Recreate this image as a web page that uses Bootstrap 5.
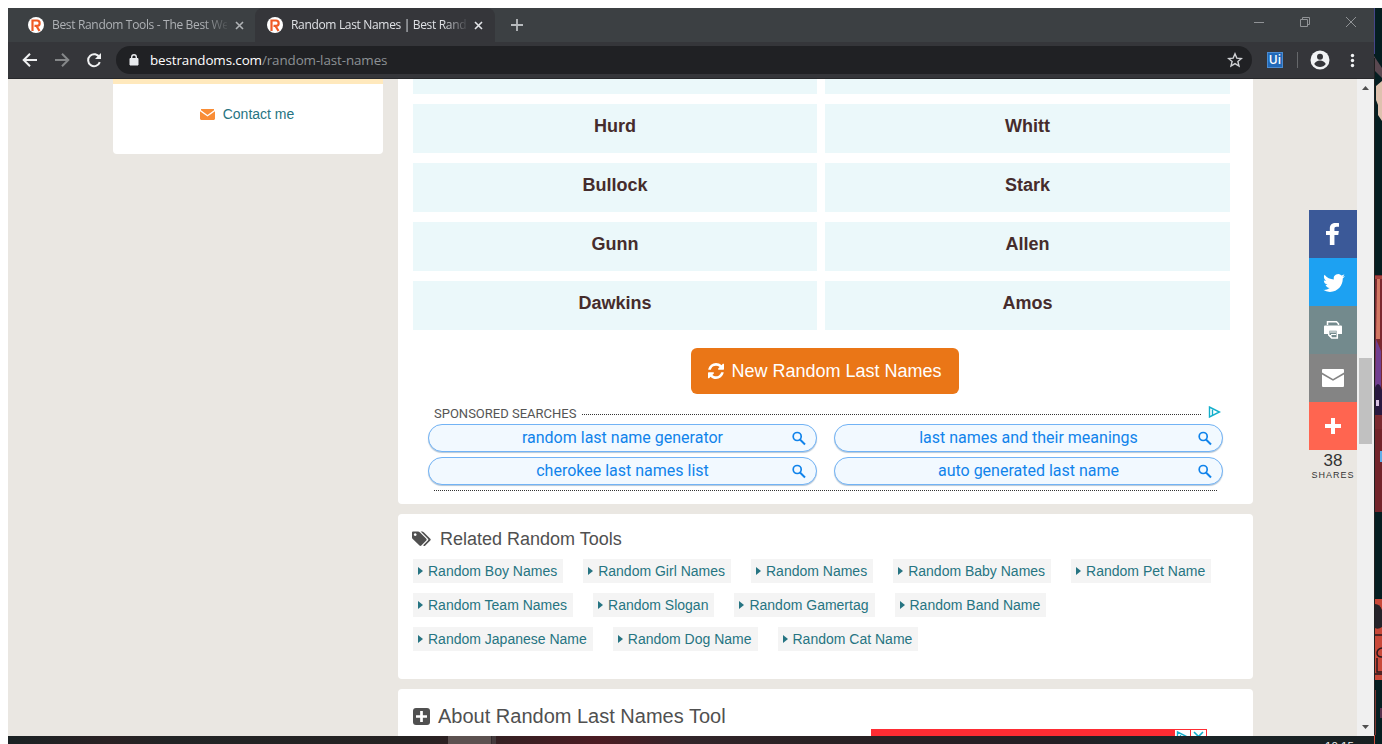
<!DOCTYPE html>
<html lang="en">
<head>
<meta charset="utf-8">
<title>Random Last Names | Best Random Tools</title>
<link href="https://cdn.jsdelivr.net/npm/bootstrap@5.3.0/dist/css/bootstrap.min.css" rel="stylesheet">
<style>
body{width:1382px;height:744px;overflow:hidden;background:#fff;font-family:"Liberation Sans",Arial,sans-serif;font-size:14px;line-height:20px;padding:8px 0 0 8px}
svg{display:block;flex:none}
.win{width:1366px}
.ui{font-family:"Open Sans","Noto Sans",sans-serif}
.strip{height:34px;background:#3c4043;color:#aeb1b5}
.tab{height:34px;font-size:12px;line-height:34px}
.tab-a{width:247px;padding-left:20px}
.tab-b{width:240px;padding-left:12px;background:#35363a;color:#dfe1e5;border-radius:8px 8px 0 0}
.tab-label{width:175px;margin:0 8px 0 8px;overflow:hidden;white-space:nowrap;letter-spacing:-.33px;-webkit-mask-image:linear-gradient(90deg,#000 152px,transparent 178px);mask-image:linear-gradient(90deg,#000 152px,transparent 178px)}
.toolbar{height:37px;background:#35363a;border-bottom:1px solid #27282b;padding-left:14px}
.omni{width:1136px;height:28px;border-radius:14px;background:#202124;margin-left:14px;padding:0 9px 0 12px;font-size:13.4px;color:#8d9195}
.url{margin-left:10px;letter-spacing:-.1px}
.omni b{font-weight:400;color:#fff}
.ext{width:16px;height:16px;background:#2169b8;border:1px solid #4b8bd0;color:#fff;font-size:12px;line-height:14px;font-weight:600;text-align:center;margin-left:15px}
.page{height:657px;background:#eae7e2}
.side{width:270px;height:75px;margin-left:105px;background:#fff;border-radius:0 0 4px 4px;border-top:5px solid #ffe9bd;padding-right:2px}
.side a{color:#267482;text-decoration:none}
.main-col{width:855px;margin-left:15px}
.panel{background:#fff;border-radius:4px;margin-bottom:10px;color:#505050}
.panel-a{height:425px;border-radius:0 0 4px 4px;padding:0 23px 0 15px}
.names{display:grid;grid-template-columns:404px 405px;gap:10px 8px;grid-template-rows:15px repeat(4,49px)}
.names div{background:#ebf8fa;text-align:center;font-size:18px;font-weight:700;color:#452c2c;line-height:44px}
.btn-new,.btn-new:hover{width:268px;height:46px;background:#ea7617;color:#fff;font-size:18px;border:0;border-radius:6px;padding:0;margin:18px auto 9px 278px}
.rob{font-family:Roboto,sans-serif}
.spon{height:20px;font-size:13px;color:#555;padding:0 9px 0 21px}
.dots{border-top:1px dotted #333;height:1px}
.pills{display:grid;grid-template-columns:389px 389px;gap:5px 17px;margin:1px 0 5px 15px}
.pill{height:28px;border:1px solid #72b3f5;border-radius:14px;background:#f2f9ff;box-shadow:0 1px 1px #b5c7d8;color:#1083eb;font-size:16px;line-height:26px;text-align:center;position:relative}
.pill svg{position:absolute;right:9px;top:6px}
.panel-b{height:165px;padding:12px 15px}
.ttl{font-size:18px;line-height:26px;font-weight:400;margin:0 0 7px;height:26px}
.tags{display:flex;flex-wrap:wrap;gap:10px 20px}
.tags a{height:24px;background:#f4f4f4;color:#267482;text-decoration:none;line-height:24px;padding:0 6px 0 5px;display:flex;align-items:center;white-space:nowrap}
.tags a::before{content:"";border:4px solid transparent;border-left:5px solid #267482;border-right:0;margin-right:5px}
.panel-c{height:47px;border-radius:4px 4px 0 0;padding:14px 15px 0;margin:0}
.ad{width:336px;height:7px;background:#fe2c33;margin-left:458px;padding:1px 1px 0 0}
.ad span{width:15px;height:6px;background:#fff;margin-left:1px;overflow:hidden}
.share{position:absolute;right:17px;top:131px;width:48px;text-align:center;color:#333}
.share>div{height:48px;display:flex;align-items:center;justify-content:center}
.share p{margin:0}
.scroll{width:17px;background:#f0f0f0;margin-left:auto;padding:7px 0 7px 0}
.thumb{width:13px;height:86px;background:#c1c1c1}
.task{height:8px;overflow:hidden;color:#eee;font-size:12px;line-height:20px;background:linear-gradient(90deg,#1a2224,#2a2123 100px,#222425 160px,#252222 400px,#352022 490px,#4b1b22 590px,#32252a 680px,#2a2224 800px,#241f24 1050px,#1c2528 1120px,#182022)}
.task i{width:44px;height:8px;background:#5c5150;border-right:1px solid #332b2d;box-shadow:4px 0 #443a3c;margin-left:440px}
</style>
</head>
<body>
<div class="d-flex">
<div class="win">
 <div class="strip ui d-flex">
  <div class="tab tab-a d-flex align-items-center">
   <svg width="16" height="16"><circle cx="8" cy="8" r="8" fill="#fff"/><path d="M4.500 14V3.500H9a2.600 2.600 0 0 1 0 5.300H6.500M8.500 9l3 5" fill="none" stroke="#ef5a24" stroke-width="2.200"/></svg>
   <span class="tab-label">Best Random Tools - The Best We</span>
   <svg width="9" height="9"><path d="M1 1l7 7M8 1L1 8" stroke="#b0b3b6" stroke-width="1.600"/></svg>
  </div>
  <div class="tab tab-b d-flex align-items-center">
   <svg width="16" height="16"><circle cx="8" cy="8" r="8" fill="#fff"/><path d="M4.500 14V3.500H9a2.600 2.600 0 0 1 0 5.300H6.500M8.500 9l3 5" fill="none" stroke="#ef5a24" stroke-width="2.200"/></svg>
   <span class="tab-label">Random Last Names | Best Rando</span>
   <svg width="9" height="9"><path d="M1 1l7 7M8 1L1 8" stroke="#e3e5e8" stroke-width="1.600"/></svg>
  </div>
  <svg class="ms-3 mt-2" width="12" height="18"><path d="M6 3v12M0 9h12" stroke="#b8bbbe" stroke-width="1.800"/></svg>
  <svg class="ms-auto" width="120" height="34" fill="none" stroke="#909396"><path d="M0 14.500h10M46.500 11.500h7v7h-7zM48.500 11.500v-2h7v7h-2M92 9l10 10M102 9L92 19"/></svg>
 </div>
 <div class="toolbar ui d-flex align-items-center">
  <svg width="80" height="20" fill="none" stroke-width="2"><path d="M15 10H2M8 3.700L1.700 10 8 16.300" stroke="#f0f1f2"/><path d="M33 10h13M40 3.700l6.300 6.300-6.300 6.300" stroke="#858789"/><path d="M77.500 7.500A6 6 0 1 0 77.800 12.200" stroke="#f0f1f2"/><path d="M79 3v6h-6z" fill="#f0f1f2"/></svg>
  <div class="omni d-flex align-items-center">
   <svg width="12" height="14"><path d="M2 5.500h8V12H2z" fill="#e8eaed" stroke="#e8eaed" stroke-linejoin="round"/><path d="M3.700 6V4a2.300 2.300 0 0 1 4.600 0v2" fill="none" stroke="#e8eaed" stroke-width="1.400"/></svg>
   <span class="url me-auto"><b>bestrandoms.com</b>/random-last-names</span>
   <svg width="16" height="16"><path d="M8 1.800l1.800 4.300 4.600.4-3.500 3 1.100 4.600L8 11.600l-4 2.500 1.100-4.600-3.500-3 4.600-.4z" fill="none" stroke="#d0d2d5" stroke-width="1.400"/></svg>
  </div>
  <div class="ext">Ui</div>
  <svg width="76" height="20"><path d="M14.500 2v16" stroke="#66686b"/><circle cx="37" cy="10" r="9.500" fill="#f1f3f4"/><circle cx="37" cy="6.800" r="3" fill="#35363a"/><path d="M31.200 14a6.500 6.500 0 0 1 11.600 0 7 7 0 0 1-11.600 0z" fill="#35363a"/><g fill="#f1f3f4"><circle cx="69.500" cy="5.500" r="1.700"/><circle cx="69.500" cy="10.500" r="1.700"/><circle cx="69.500" cy="15.500" r="1.700"/></g></svg>
 </div>
 <div class="page d-flex position-relative overflow-hidden">
  <div class="side d-flex justify-content-center">
   <div class="d-flex align-items-center" style="height:60px">
    <svg width="15" height="11"><path d="M1 0h13v1.300L7.500 6 1 1.300zM0 2.200l7.500 5.300L15 2.200V10l-1 1H1l-1-1z" fill="#f98d36"/></svg>
    <a class="ms-2" href="#">Contact me</a>
   </div>
  </div>
  <div class="main-col">
   <div class="panel panel-a">
    <div class="names"><div></div><div></div><div>Hurd</div><div>Whitt</div><div>Bullock</div><div>Stark</div><div>Gunn</div><div>Allen</div><div>Dawkins</div><div>Amos</div></div>
    <button class="btn btn-new d-flex align-items-center justify-content-center"><svg width="16" height="16" style="margin-right:7px" viewBox="0 0 1536 1536" fill="#fff"><path d="M1511 928q0 5-1 7-64 268-268 434.500t-478 166.500q-146 0-282.500-55t-243.500-157l-129 129q-19 19-45 19t-45-19-19-45v-448q0-26 19-45t45-19h448q26 0 45 19t19 45-19 45l-137 137q71 66 161 102t187 36q134 0 250-65t186-179q11-17 53-117 8-23 30-23h192q13 0 22.500 9.500t9.500 22.500zm25-800v448q0 26-19 45t-45 19h-448q-26 0-45-19t-19-45 19-45l138-138q-148-137-349-137-134 0-250 65t-186 179q-11 17-53 117-8 23-30 23h-199q-13 0-22.500-9.500t-9.500-22.500v-7q65-268 270-434.500t480-166.500q146 0 284 55.500t245 156.500l130-129q19-19 45-19t45 19 19 45z"/></svg>New Random Last Names</button>
    <div class="spon rob d-flex align-items-center"><span style="padding-top:1px">SPONSORED SEARCHES</span><div class="dots flex-fill" style="margin:2px 7px 0 6px"></div><svg width="13" height="12" style="margin-top:-2px" fill="none" stroke="#12aecb" stroke-width="1.400"><path d="M1.500 1v10l10-5z"/><path d="M4.500 3.500v5.500"/></svg></div>
    <div class="pills rob">
     <div class="pill">random last name generator<svg width="16" height="16" fill="none" stroke="#1083eb"><circle cx="6.200" cy="5.500" r="4" stroke-width="1.700"/><path d="M9 8.500l5 5" stroke-width="2"/></svg></div>
     <div class="pill">last names and their meanings<svg width="16" height="16" fill="none" stroke="#1083eb"><circle cx="6.200" cy="5.500" r="4" stroke-width="1.700"/><path d="M9 8.500l5 5" stroke-width="2"/></svg></div>
     <div class="pill">cherokee last names list<svg width="16" height="16" fill="none" stroke="#1083eb"><circle cx="6.200" cy="5.500" r="4" stroke-width="1.700"/><path d="M9 8.500l5 5" stroke-width="2"/></svg></div>
     <div class="pill">auto generated last name<svg width="16" height="16" fill="none" stroke="#1083eb"><circle cx="6.200" cy="5.500" r="4" stroke-width="1.700"/><path d="M9 8.500l5 5" stroke-width="2"/></svg></div>
    </div>
    <div class="dots" style="margin:0 13px 0 21px"></div>
   </div>
   <div class="panel panel-b">
    <h2 class="ttl d-flex align-items-center"><svg width="19" height="16" style="margin:0 9px 0 -1px" fill="#505050"><path fill-rule="evenodd" d="M0 1.500Q0 .5 1 .5h5q1 0 2 .9l6.300 6.300q.9.900 0 1.800l-5 5q-.9.900-1.800 0L1 8.300Q0 7.400 0 6.400zM3.200 2.200a1.400 1.400 0 1 0 .01 0z"/><path d="M8.700.500h1.300q1 0 2 .9l6.300 6.300q.9.900 0 1.800l-5 5q-.9.900-1.700.2l-.4-.5 4.700-4.700q.9-.9 0-1.800z"/></svg>Related Random Tools</h2>
    <div class="tags"><a href="#">Random Boy Names</a><a href="#">Random Girl Names</a><a href="#">Random Names</a><a href="#">Random Baby Names</a><a href="#">Random Pet Name</a><a href="#">Random Team Names</a><a href="#">Random Slogan</a><a href="#">Random Gamertag</a><a href="#">Random Band Name</a><a href="#">Random Japanese Name</a><a href="#">Random Dog Name</a><a href="#">Random Cat Name</a></div>
   </div>
   <div class="panel panel-c">
    <h2 class="ttl d-flex align-items-center mb-0" style="font-size:20px"><svg width="17" height="17" style="margin-right:8px"><rect width="17" height="17" rx="3" fill="#505050"/><path d="M8.500 3v11M3 8.500h11" stroke="#fff" stroke-width="2.700"/></svg>About Random Last Names Tool</h2>
    <div class="ad d-flex justify-content-end"><span><svg width="15" height="12" fill="none" stroke="#12aecb" stroke-width="1.400"><path d="M2.500 2v9l9-4.500zM5.500 5v5"/></svg></span><span><svg width="15" height="12" stroke="#12aecb" stroke-width="1.600"><path d="M3 2l9 9M12 2l-9 9"/></svg></span></div>
   </div>
  </div>
  <div class="share">
   <div style="background:#3b5998"><svg width="32" height="32" viewBox="0 0 32 32" fill="#fff"><path d="M22 5.160c-.406-.054-1.806-.16-3.430-.16-3.400 0-5.733 1.825-5.733 5.170v2.882H9v3.913h3.837V27h4.604V16.965h3.823l.587-3.913h-4.410v-2.500c0-1.123.347-1.903 2.198-1.903H22V5.160z"/></svg></div>
   <div style="background:#1da1f2"><svg width="32" height="32" viewBox="0 0 32 32" fill="#fff"><path d="M27.996 10.116c-.81.360-1.680.602-2.592.710a4.526 4.526 0 0 0 1.984-2.496 9.037 9.037 0 0 1-2.866 1.095 4.513 4.513 0 0 0-7.690 4.116 12.810 12.810 0 0 1-9.300-4.715 4.490 4.490 0 0 0-.612 2.270 4.510 4.510 0 0 0 2.008 3.755 4.495 4.495 0 0 1-2.044-.564v.057a4.515 4.515 0 0 0 3.620 4.425 4.520 4.520 0 0 1-2.040.077 4.517 4.517 0 0 0 4.217 3.134 9.055 9.055 0 0 1-5.604 1.930A9.180 9.180 0 0 1 6 23.850a12.773 12.773 0 0 0 6.918 2.027c8.300 0 12.840-6.876 12.840-12.840 0-.195-.005-.39-.014-.583a9.172 9.172 0 0 0 2.252-2.336"/></svg></div>
   <div style="background:#738a8d"><svg width="20" height="20"><path d="M4.500 5V1.700h9l2 2V5" fill="none" stroke="#fff" stroke-width="1.500"/><path d="M2 5.500h16q1 0 1 1V14h-4v-4H5v4H1V6.500q0-1 1-1z" fill="#fff"/><path d="M5.700 10v5l3 3h5.600v-8z" fill="none" stroke="#fff" stroke-width="1.500"/><path d="M7 12h6M8 14.500h5" stroke="#fff"/><path d="M5.500 15h3v3z" fill="#fff"/></svg></div>
   <div style="background:#848484"><svg width="24" height="20"><path d="M2 1h20q1 0 1 1v2.500L12 11 1 4.500V2q0-1 1-1z" fill="#fff"/><path d="M1 6.500l11 6.300 11-6.300V18q0 1-1 1H2q-1 0-1-1z" fill="#fff"/></svg></div>
   <div style="background:#ff6550"><svg width="16" height="16"><path d="M8 0v16M0 8h16" stroke="#fff" stroke-width="4"/></svg></div>
   <p style="font-size:17px;line-height:21px">38</p>
   <p style="font-size:9px;line-height:9px;letter-spacing:1px">SHARES</p>
  </div>
  <div class="scroll d-flex flex-column align-items-center">
   <svg width="7" height="4"><path d="M0 4h7L3.500 0z" fill="#505050"/></svg>
   <div class="thumb" style="margin-top:268px"></div>
   <svg class="mt-auto" width="7" height="4"><path d="M0 0h7L3.500 4z" fill="#505050"/></svg>
  </div>
 </div>
 <div class="task d-flex"><i></i><span style="margin-left:833px;font-size:11.500px">10:15</span></div>
</div>
<svg width="8" height="736">
 <rect width="8" height="736" fill="#051e21"/>
 <path d="M0 0h1v46H0z" fill="#45458a"/>
 <path d="M0 48l8 12v10L0 62z" fill="#5a4850"/><path d="M2 78l6-5v40l-4-6v-10L2 92z" fill="#dec1ae"/>
 <path d="M0 267h8v154H0z" fill="#7a2930"/><path d="M0 268h8v3H0z" fill="#a9423d"/><path d="M3 271h3v60H2z" fill="#d27762"/><path d="M2 331l5 12v40H1z" fill="#713f91"/><path d="M0 382q4-12 8 0v25H0z" fill="#291940"/><path d="M2 392h3v6H2z" fill="#d7c1e1"/>
 <path d="M0 421h8v83H0z" fill="#72242a"/><path d="M6 443h2v11H6z" fill="#60aee7"/>
 <path d="M0 591h8v81H0z" fill="#c84939"/><path d="M1 596q5 0 7 6v17q-4 3-7 1z" fill="#252329"/><path d="M0 627h8M0 666h8M3 650v14h5M8 640q-5 1-5 5t5 4" fill="none" stroke="#29191e" stroke-width="1.500"/>
 <path d="M1 682v45" stroke="#a63e35" stroke-width="1.500"/><path d="M6 700h2v10H6z" fill="#54304c"/><path d="M0 727h1v9H0z" fill="#d14f3d"/>
 <path d="M.5 50v677" stroke="#202020"/>
</svg>
</div>
<script src="https://cdn.jsdelivr.net/npm/bootstrap@5.3.0/dist/js/bootstrap.bundle.min.js"></script>
</body>
</html>
